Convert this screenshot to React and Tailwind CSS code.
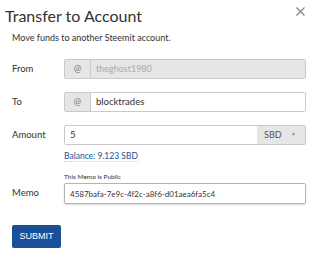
export default function App() {
  return (
    <div
      className="relative w-[320px] h-[261px] bg-white text-[#333]"
      style={{ fontFamily: "Lato, 'Open Sans', sans-serif" }}
    >
      <button className="absolute right-[15px] top-[7px] w-[9px] h-[9px]">
        <svg viewBox="0 0 9 9" className="w-[9px] h-[9px]">
          <path d="M0.5 0.5 L8.5 8.5 M8.5 0.5 L0.5 8.5" stroke="#8a8a8a" strokeWidth="1.4" />
        </svg>
      </button>
      <div className="pt-[4px] pl-[5px]">
        <h2 className="text-[16px] leading-[24px] font-normal text-[#333]">
          Transfer to Account
        </h2>
      </div>
      <p className="pl-[12px] mt-[4px] text-[9px] leading-[12px] text-[#333]">
        Move funds to another Steemit account.
      </p>

      <div className="pl-[12px] pr-[14px] mt-[15px] flex flex-col text-[9.5px]">
        <div className="flex items-center h-[20px]">
          <div className="w-[52px]">From</div>
          <div className="flex-1 flex h-full border border-[#cacaca] rounded-[2px] overflow-hidden">
            <div className="w-[26px] bg-[#e6e6e6] border-r border-[#cacaca] flex items-center justify-center text-[9px] text-[#777]">
              @
            </div>
            <div className="flex-1 bg-[#e6e6e6] flex items-center pl-[5px] text-[9px] text-[#aaa]">
              theghost1980
            </div>
          </div>
        </div>

        <div className="flex items-center h-[20px] mt-[13px]">
          <div className="w-[52px]">To</div>
          <div className="flex-1 flex h-full border border-[#cacaca] rounded-[2px] overflow-hidden">
            <div className="w-[26px] bg-[#e6e6e6] border-r border-[#cacaca] flex items-center justify-center text-[9px] text-[#777]">
              @
            </div>
            <div className="flex-1 bg-white flex items-center pl-[5px] text-[#333]">
              blocktrades
            </div>
          </div>
        </div>

        <div className="flex items-center h-[20px] mt-[13px]">
          <div className="w-[52px]">Amount</div>
          <div className="flex-1 flex h-full border border-[#cacaca] rounded-[2px] overflow-hidden">
            <div className="flex-1 bg-white flex items-center pl-[5px] text-[#333]">
              5
            </div>
            <div className="w-[48px] bg-[#e6e6e6] flex items-center justify-between pl-[7px] pr-[9px] text-[9px] text-[#555]">
              <span>SBD</span>
              <span className="text-[5px] text-[#888]">▼</span>
            </div>
          </div>
        </div>

        <div className="pl-[52px] mt-[5px] leading-[12px] h-[12px]">
          <span className="text-[8.5px] leading-[12px] text-[#1a5099] border-b border-dotted border-[#ccc]">
            Balance: 9.123 SBD
          </span>
        </div>

        <div className="pl-[52px] mt-[10px] text-[6.5px] leading-[9px] text-[#333]">
          This Memo is Public
        </div>
        <div className="flex items-center h-[21px] mt-[2px]">
          <div className="w-[52px]">Memo</div>
          <div className="flex-1 h-full border border-[#b5b5b5] rounded-[2px] bg-white flex items-center pl-[5px] text-[8px] text-[#333] shadow-[0_1px_2px_rgba(0,0,0,0.15)]">
            4587bafa-7e9c-4f2c-a8f6-d01aea6fa5c4
          </div>
        </div>

        <div className="mt-[21px] leading-none">
          <button
            className="w-[49px] h-[23px] bg-[#1a5099] rounded-[2px] text-white text-[9px]"
            style={{ fontFamily: "'Liberation Sans', Arial, sans-serif" }}
          >
            SUBMIT
          </button>
        </div>
      </div>
    </div>
  );
}
